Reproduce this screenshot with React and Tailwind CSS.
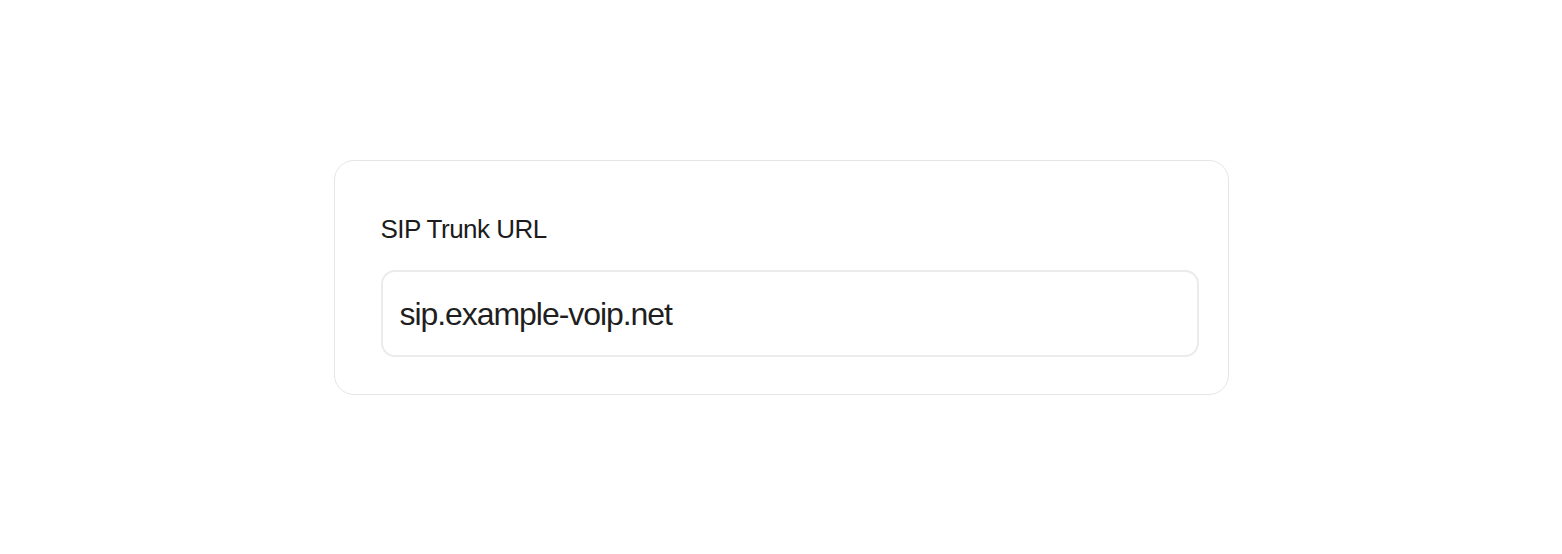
import React, { useState } from 'react';

function App() {
  const [url, setUrl] = useState('sip.example-voip.net');

  return (
    <div className="w-full h-[554px] bg-white flex items-center justify-center font-['Liberation_Sans',Arial,sans-serif]">
      {/* Settings card */}
      <div className="w-[895px] border border-[#e6e6e6] rounded-[20px] pt-[53px] pb-[37px] pl-[46px] pr-[29px] flex flex-col gap-[26px]">
        <label htmlFor="sip-url" className="text-[26px] leading-[30px] text-[#1c1c1c] tracking-[-0.02em]">
          SIP Trunk URL
        </label>
        <input
          id="sip-url"
          value={url}
          onChange={(e) => setUrl(e.target.value)}
          className="w-full h-[87px] border-2 border-[#ebebeb] rounded-[14px] pl-[17px] pr-[17px] pt-[3px] text-[32px] text-[#1f1f1f] tracking-[-0.033em] outline-none bg-white"
        />
      </div>
    </div>
  );
}

export default App;
